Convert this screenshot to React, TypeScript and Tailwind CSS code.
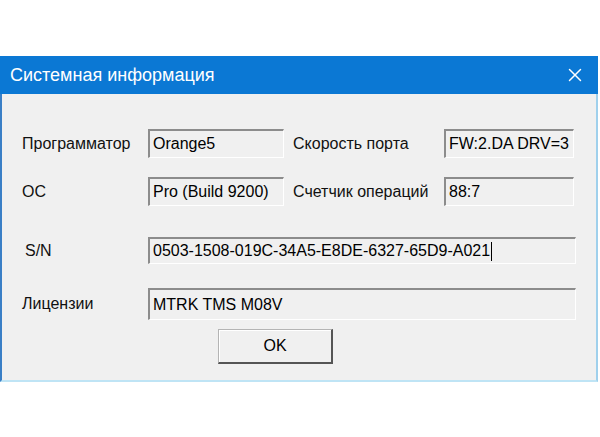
import { X } from 'lucide-react';

const font = { fontFamily: '"Liberation Sans", Arial, sans-serif' };

function Field({ value, width, height, caret }: { value: string; width: string; height: string; caret?: boolean }) {
  return (
    <div
      className={`${width} ${height} flex items-center pl-[3px] border-t-2 border-l-2 border-b border-r border-t-[#8c8c8c] border-l-[#8c8c8c] border-b-white border-r-white bg-[#f0f0f0] text-[16px] text-black whitespace-nowrap overflow-hidden`}
    >
      <span>{value}</span>
      {caret && <span className="ml-px inline-block w-px h-[19px] bg-black" />}
    </div>
  );
}

export default function App() {
  return (
    <div className="w-[600px] h-[437px] bg-white pt-[56px]" style={font}>
      <div className="w-[598px] flex flex-col">
        {/* Title bar */}
        <div className="h-[38px] bg-[#0b78d4] flex items-center justify-between pl-[10px] pr-[12px]">
          <span className="text-[18px] text-white">Системная информация</span>
          <X size={22} color="#ffffff" strokeWidth={1.6} />
        </div>

        {/* Body */}
        <div className="h-[288px] bg-[#f0f0f0] border-l-2 border-l-[#3a7fc6] border-r-2 border-r-[#9fd0ec] border-b-2 border-b-[#bfe4f5] pt-[35px] text-[16px] text-[#111]">
          <div className="flex items-center pl-[20px]">
            <span className="w-[126px]">Программатор</span>
            <Field value="Orange5" width="w-[136px]" height="h-[29px]" />
            <span className="w-[160px] pl-[9px]">Скорость порта</span>
            <Field value="FW:2.DA DRV=3" width="w-[130px]" height="h-[29px]" />
          </div>

          <div className="flex items-center pl-[20px] mt-[19px]">
            <span className="w-[126px]">ОС</span>
            <Field value="Pro (Build 9200)" width="w-[136px]" height="h-[29px]" />
            <span className="w-[160px] pl-[9px]">Счетчик операций</span>
            <Field value="88:7" width="w-[130px]" height="h-[29px]" />
          </div>

          <div className="flex items-center pl-[23px] mt-[31px]">
            <span className="w-[123px]">S/N</span>
            <Field value="0503-1508-019C-34A5-E8DE-6327-65D9-A021" width="w-[428px]" height="h-[27px]" caret />
          </div>

          <div className="flex items-center pl-[20px] mt-[24px]">
            <span className="w-[126px]">Лицензии</span>
            <Field value="MTRK TMS M08V" width="w-[428px]" height="h-[32px]" />
          </div>

          <div className="flex mt-[9px] pl-[216px]">
            <button className="w-[115px] h-[35px] bg-[#f0f0f0] border border-t-[#b4b4b4] border-l-[#b4b4b4] border-r-2 border-b-2 border-r-[#555] border-b-[#555] shadow-[inset_1px_1px_0_#ffffff] text-[16px] text-black">
              OK
            </button>
          </div>
        </div>
      </div>
    </div>
  );
}
